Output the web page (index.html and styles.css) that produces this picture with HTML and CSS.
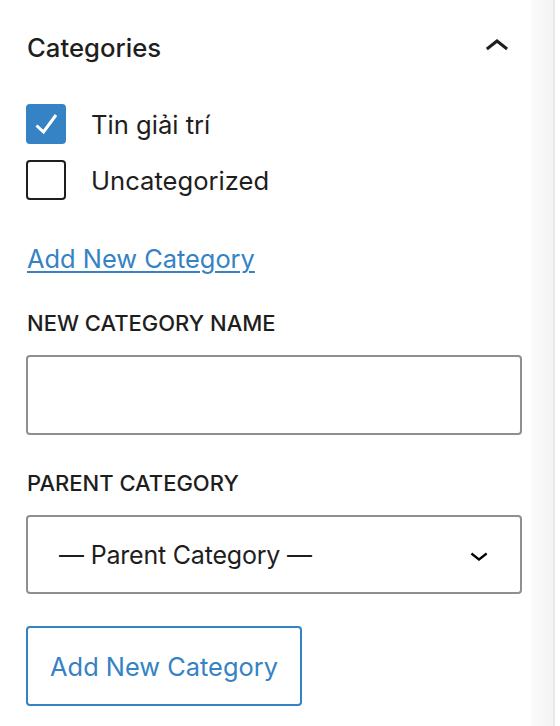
FILE: index.html
```html
<!DOCTYPE html>
<html lang="en">
<head>
  <meta charset="UTF-8" />
  <title>Categories</title>
  <link rel="stylesheet" href="styles.css">
</head>
<body>
  <div class="sidebar">
    <div class="panel">
      <div class="panel-header">
        <h2>Categories</h2>
        <svg class="toggle" viewBox="0 0 24 24" width="48" height="48"><path d="M6.5 12.4L12 8l5.5 4.4-.9 1.2L12 10l-4.6 3.6-1-1.2z"/></svg>
      </div>

      <ul class="term-list">
        <li>
          <span class="checkbox checked">
            <svg viewBox="0 0 40 40" width="40" height="40"><polyline points="10.5,21.5 17.5,28 30,11" /></svg>
          </span>
          <label>Tin giải trí</label>
        </li>
        <li>
          <span class="checkbox"></span>
          <label>Uncategorized</label>
        </li>
      </ul>

      <a href="#" class="add-link">Add New Category</a>

      <label class="field-label">New Category Name</label>
      <input type="text" class="text-input" />

      <label class="field-label">Parent Category</label>
      <div class="select">
        <span>— Parent Category —</span>
        <svg viewBox="0 0 24 24" width="36" height="36"><path d="M17.5 11.6L12 16l-5.5-4.4.9-1.2L12 14l4.6-3.6 1 1.2z"/></svg>
      </div>

      <button class="add-button">Add New Category</button>
    </div>
    <div class="scrollbar"></div>
  </div>
</body>
</html>
```

FILE: styles.css
```css
body {
  margin: 0;
  font-family: Inter, "Noto Sans", sans-serif;
  color: #1e1e1e;
  background: #fff;
}
.sidebar {
  display: flex;
  height: 726px;
}
.panel {
  width: 496px;
  padding: 0 9px 0 26px;
  display: flex;
  flex-direction: column;
  align-items: flex-start;
}
.panel-header {
  width: 100%;
  height: 94px;
  display: flex;
  align-items: center;
  justify-content: space-between;
}
h2 {
  margin: 0 0 0 1px;
  font-size: 25.7px;
  font-weight: 500;
}
.toggle {
  margin-right: 1px;
  fill: #1e1e1e;
}
.term-list {
  list-style: none;
  margin: 10px 0 0;
  padding: 0;
  display: flex;
  flex-direction: column;
  gap: 16px;
}
.term-list li {
  display: flex;
  align-items: center;
  gap: 25px;
  height: 40px;
}
.term-list label {
  font-size: 25.6px;
}
.checkbox {
  box-sizing: border-box;
  width: 40px;
  height: 40px;
  border: 2px solid #1e1e1e;
  border-radius: 4px;
  display: block;
}
.checkbox.checked {
  background: #3582c4;
  border-color: #3582c4;
}
.checkbox svg {
  display: block;
  margin: -2px;
  fill: none;
  stroke: #fff;
  stroke-width: 3;
}
.add-link {
  margin-top: 43px;
  margin-left: 1px;
  font-size: 25.4px;
  line-height: 32px;
  color: #3582c4;
  text-decoration: underline;
  text-underline-offset: 3px;
  text-decoration-thickness: 2px;
}
.field-label {
  display: block;
  margin: 32px 0 16px 1px;
  font-size: 22px;
  font-weight: 500;
  line-height: 32px;
  text-transform: uppercase;
}
.text-input {
  box-sizing: border-box;
  width: 496px;
  height: 80px;
  margin: 0;
  border: 2px solid #8f8f8f;
  border-radius: 4px;
}
.select {
  box-sizing: border-box;
  width: 496px;
  height: 79px;
  border: 2px solid #8f8f8f;
  border-radius: 4px;
  display: flex;
  align-items: center;
  justify-content: space-between;
  padding: 0 23px 0 31px;
  font-size: 25px;
}
.select span {
  letter-spacing: -0.2px;
}
.add-button {
  box-sizing: border-box;
  margin-top: 32px;
  width: 276px;
  height: 80px;
  border: 2px solid #3582c4;
  border-radius: 4px;
  background: #fff;
  color: #3582c4;
  font-family: inherit;
  font-size: 25.4px;
  padding: 0;
}
.scrollbar {
  width: 22px;
  background: linear-gradient(to right, #fbfbfb, #f3f3f3);
  border-right: 2px solid #e8e8e8;
}
```
